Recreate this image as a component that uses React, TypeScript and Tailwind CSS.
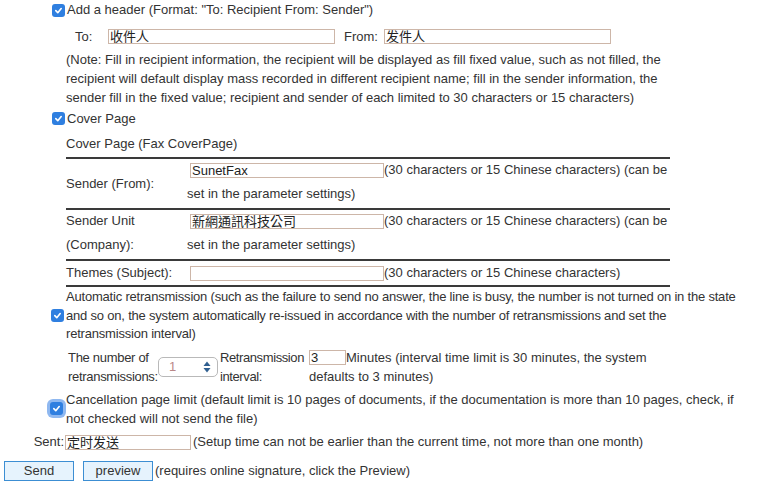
import React from 'react'

function Check({ focus = false }: { focus?: boolean }) {
    return (
        <span className={`inline-flex w-[13px] h-[13px] shrink-0 items-center justify-center rounded-[3px] bg-[#2f7fe0] ${focus ? 'ring-[3px] ring-[#8fb8f0]' : ''}`}>
            <svg width="9" height="9" viewBox="0 0 10 10">
                <path d="M2 5.2 L4.2 7.4 L8 2.8" fill="none" stroke="#fff" strokeWidth="1.8" strokeLinecap="round" strokeLinejoin="round" />
            </svg>
        </span>
    )
}

function Field({ value = '', className = '' }: { value?: string; className?: string }) {
    return (
        <span className={`inline-block shrink-0 align-middle h-[15px] border border-[#cdb6a8] bg-white leading-[13px] pl-[1px] text-[13px] text-[#222] font-['Liberation_Sans','Noto_Sans_CJK_SC',sans-serif] ${className}`}>
            {value}
        </span>
    )
}

export default function App() {
    return (
        <div className="w-[758px] h-[488px] bg-white text-[13px] text-[#333] font-['Liberation_Sans',sans-serif] overflow-hidden">
            <div className="flex items-center gap-[2px] pl-[52px] pt-[1px] h-[19px]">
                <Check />
                <span>Add a header (Format: "To: Recipient From: Sender")</span>
            </div>

            <div className="flex items-center h-[15px] mt-[10px] pl-[75px]">
                <span className="w-[33px]">To:</span>
                <Field value="收件人" className="w-[227px]" />
                <span className="ml-[9px] w-[40px]">From:</span>
                <Field value="发件人" className="w-[227px]" />
            </div>

            <p className="pl-[66px] mt-[6px] leading-[19px] whitespace-nowrap">
                (Note: Fill in recipient information, the recipient will be displayed as fill fixed value, such as not filled, the<br />
                recipient will default display mass recorded in different recipient name; fill in the sender information, the<br />
                sender fill in the fixed value; recipient and sender of each limited to 30 characters or 15 characters)
            </p>

            <div className="flex items-center gap-[2px] pl-[52px] mt-[2px] h-[19px]">
                <Check />
                <span>Cover Page</span>
            </div>

            <div className="pl-[66px] w-[670px]">
                <div className="h-[29px] pt-[6px] leading-[19px]">Cover Page (Fax CoverPage)</div>
                <div className="border-t-2 border-[#3a3a3a]" />
                <div className="flex h-[49px] items-center">
                    <div className="w-[121px]">Sender (From):</div>
                    <div className="flex-1 self-start -mt-[1px] leading-[24px] whitespace-nowrap">
                        <Field value="SunetFax" className="w-[194px] ml-[3px]" />
                        <span>(30 characters or 15 Chinese characters) (can be<br />set in the parameter settings)</span>
                    </div>
                </div>
                <div className="border-t-2 border-[#3a3a3a]" />
                <div className="flex h-[49px] items-start">
                    <div className="w-[121px] -mt-[1px] leading-[24px]">Sender Unit<br />(Company):</div>
                    <div className="flex-1 -mt-[1px] leading-[24px] whitespace-nowrap">
                        <Field value="新網通訊科技公司" className="w-[194px] ml-[3px] font-['Liberation_Sans','Noto_Sans_CJK_TC',sans-serif]" />
                        <span>(30 characters or 15 Chinese characters) (can be<br />set in the parameter settings)</span>
                    </div>
                </div>
                <div className="border-t-2 border-[#3a3a3a]" />
                <div className="flex h-[24px] items-center">
                    <div className="w-[121px]">Themes (Subject):</div>
                    <div className="flex-1 flex items-center">
                        <Field className="w-[194px] ml-[3px]" />
                        <span>(30 characters or 15 Chinese characters)</span>
                    </div>
                </div>
                <div className="border-t-2 border-[#3a3a3a]" />
            </div>

            <div className="flex items-center pl-[51px]">
                <div className="w-[15px] shrink-0"><Check /></div>
                <p className="leading-[18.5px] pt-[1px] whitespace-nowrap tracking-[-0.2px]">
                    Automatic retransmission (such as the failure to send no answer, the line is busy, the number is not turned on in the state<br />
                    and so on, the system automatically re-issued in accordance with the number of retransmissions and set the<br />
                    retransmission interval)
                </p>
            </div>

            <div className="flex items-center pl-[68px] mt-[4px] leading-[19px]">
                <div className="w-[90px] shrink-0 tracking-[-0.3px]">The number of<br />retransmissions:</div>
                <div className="w-[60px] h-[20px] shrink-0 flex items-center justify-between rounded-[5px] border border-[#b9b9b9] bg-white pl-[10px] pr-[6px]">
                    <span className="text-[#b98888]">1</span>
                    <svg width="8" height="12" viewBox="0 0 8 12">
                        <path d="M4 0.5 L7.5 5 L0.5 5 Z" fill="#2f5f90" />
                        <path d="M4 11.5 L7.5 7 L0.5 7 Z" fill="#2f5f90" />
                    </svg>
                </div>
                <div className="w-[89px] shrink-0 ml-[2px] tracking-[-0.4px]">Retransmission<br />interval:</div>
                <div className="whitespace-nowrap">
                    <Field value="3" className="w-[37px] align-top mt-[2px]" />
                    <span>Minutes (interval time limit is 30 minutes, the system<br />defaults to 3 minutes)</span>
                </div>
            </div>

            <div className="flex items-center pl-[50px] mt-[4px]">
                <div className="w-[16px] shrink-0"><Check focus /></div>
                <p className="leading-[19px] whitespace-nowrap">
                    Cancellation page limit (default limit is 10 pages of documents, if the documentation is more than 10 pages, check, if<br />
                    not checked will not send the file)
                </p>
            </div>

            <div className="flex items-center h-[15px] mt-[7px]">
                <span className="w-[65px] shrink-0 text-right pr-[1px]">Sent:</span>
                <Field value="定时发送" className="w-[126px]" />
                <span className="ml-[2px]">(Setup time can not be earlier than the current time, not more than one month)</span>
            </div>

            <div className="flex items-center mt-[11px] pl-[4px]">
                <button className="w-[70px] h-[20px] border border-[#3c8ed3] bg-[#e6f3fd] text-[13px] leading-[18px]">Send</button>
                <button className="w-[70px] h-[20px] ml-[9px] border border-[#3c8ed3] bg-[#e6f3fd] text-[13px] leading-[18px]">preview</button>
                <span className="ml-[2px]">(requires online signature, click the Preview)</span>
            </div>
        </div>
    )
}
